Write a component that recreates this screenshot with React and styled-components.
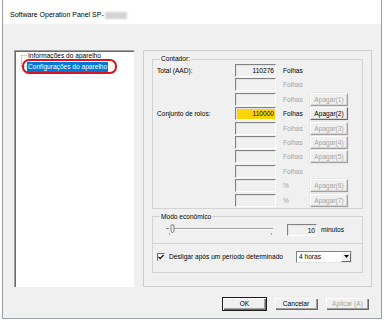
import React from "react";
import styled, { createGlobalStyle } from "styled-components";

const GlobalStyle = createGlobalStyle`
  html, body {
    margin: 0;
    padding: 0;
    background: #fff;
  }
  body {
    font-family: "Liberation Sans", Arial, sans-serif;
    font-size: 6.6px;
    color: #000;
  }
  * {
    box-sizing: border-box;
  }
`;

const Window = styled.div`
  width: 380px;
  height: 319px;
  margin-left: 2px;
  border: 1px solid #9a9ea6;
  border-top: none;
  display: flex;
  flex-direction: column;
`;

const TitleBar = styled.div`
  height: 24px;
  flex: none;
  background: #fff;
  padding: 6px 0 0 7px;
  display: flex;
  align-items: center;
  align-self: stretch;
  font-size: 7px;
  line-height: 10px;
`;

const Blurred = styled.span`
  display: inline-block;
  width: 22px;
  height: 7px;
  margin-left: 1px;
  background: #d4d4d4;
  filter: blur(1px);
`;

const Body = styled.div`
  flex: 1;
  background: #f0f0f0;
  padding: 26px 9px 0 11px;
  display: flex;
  flex-direction: column;
`;

const Main = styled.div`
  display: flex;
  gap: 9px;
  height: 237px;
`;

const Tree = styled.div`
  width: 120px;
  background: #fff;
  border-top: 1px solid #a0a0a0;
  border-left: 1px solid #a0a0a0;
  box-shadow: inset 1px 1px 0 #696969;
  overflow: hidden;
`;

const TreeItem = styled.div`
  height: 11px;
  display: flex;
  align-items: center;
  margin-top: ${(p) => (p.$first ? "-1px" : "0")};
`;

const TreeLabel = styled.span`
  position: relative;
  padding: 0 1px;
  line-height: 10px;
  background: ${(p) => (p.$selected ? "#0078d7" : "transparent")};
  color: ${(p) => (p.$selected ? "#fff" : "#000")};
`;

const Callout = styled.span`
  position: absolute;
  left: -5px;
  top: -3px;
  width: 95px;
  height: 15px;
  border: 2px solid #e3101c;
  border-radius: 7px;
`;

const TabPage = styled.div`
  flex: 1;
  border: 1px solid #cfcfcf;
  padding: 4px 8px;
  display: flex;
  flex-direction: column;
`;

const Group = styled.fieldset`
  margin: ${(p) => (p.$spaced ? "4px 0 0" : "0")};
  min-width: 0;
  border: 1px solid #d3d3d3;
  padding: ${(p) => p.$pad || "1px 4px 0 4px"};
`;

const Legend = styled.legend`
  margin-left: 3px;
  padding: 0 1px;
  font-size: 6.6px;
  line-height: 8px;
`;

const CounterRow = styled.div`
  display: grid;
  grid-template-columns: 78px 41px 34px 38px;
  height: 14.4px;
  align-items: start;
`;

const RowLabel = styled.span`
  line-height: 13px;
`;

const Field = styled.div`
  width: ${(p) => p.$w || "41px"};
  height: 13px;
  background: ${(p) => (p.$highlight ? "#ffd400" : "#f0f0f0")};
  border-top: 1px solid #828282;
  border-left: 1px solid #828282;
  border-right: 1px solid #fff;
  border-bottom: 1px solid #fff;
  box-shadow: inset 1px 1px 0 #e3e3e3;
  text-align: right;
  padding-right: 1px;
  line-height: 11px;
  overflow: hidden;
  white-space: nowrap;
`;

const Unit = styled.span`
  padding-left: 7px;
  line-height: 13px;
  color: ${(p) => (p.$disabled ? "#a5a5a5" : "#000")};
`;

const SmallButton = styled.div`
  width: 38px;
  height: 13px;
  background: #f0f0f0;
  border-top: 1px solid #fff;
  border-left: 1px solid #fff;
  border-right: 1px solid ${(p) => (p.$disabled ? "#a0a0a0" : "#696969")};
  border-bottom: 1px solid ${(p) => (p.$disabled ? "#a0a0a0" : "#696969")};
  box-shadow: inset -1px -1px 0 #d5d5d5, 0 0 0 0.5px #e0e0e0;
  color: ${(p) => (p.$disabled ? "#a5a5a5" : "#000")};
  text-align: center;
  line-height: 11px;
`;

const SliderRow = styled.div`
  height: 14px;
  display: flex;
  align-items: center;
`;

const Minutes = styled.span`
  margin-left: 4px;
`;

const PowerBox = styled.div`
  border: 1px solid #d3d3d3;
  border-top: none;
  padding: 7px 10px 9px 4px;
  display: flex;
  align-items: center;
`;

const CheckBox = styled.span`
  width: 8px;
  height: 8px;
  background: #fff;
  border-top: 1px solid #696969;
  border-left: 1px solid #696969;
  border-right: 1px solid #e3e3e3;
  border-bottom: 1px solid #e3e3e3;
  display: flex;
  align-items: center;
  justify-content: center;
`;

const CheckLabel = styled.span`
  flex: 1;
  margin-left: 4px;
  line-height: 10px;
`;

const Select = styled.div`
  width: 56px;
  height: 12px;
  background: #fff;
  border-top: 1px solid #828282;
  border-left: 1px solid #828282;
  border-right: 1px solid #e3e3e3;
  border-bottom: 1px solid #e3e3e3;
  display: flex;
  align-items: center;
  padding-left: 2px;
`;

const SelectText = styled.span`
  flex: 1;
  line-height: 10px;
`;

const SelectArrow = styled.span`
  width: 10px;
  height: 10px;
  background: #f0f0f0;
  border-right: 1px solid #696969;
  border-bottom: 1px solid #696969;
  border-top: 1px solid #fff;
  border-left: 1px solid #fff;
  display: flex;
  align-items: center;
  justify-content: center;
`;

const ButtonRow = styled.div`
  margin-top: 10px;
  padding-right: 2px;
  display: flex;
  justify-content: flex-end;
  gap: 6.5px;
`;

const DialogButton = styled.div`
  width: 45px;
  height: 14px;
  background: #f0f0f0;
  border: 1px solid ${(p) => (p.$default ? "#1a1a1a" : "#f0f0f0")};
  box-shadow: inset 1px 1px 0 #fff, inset -1px -1px 0 #696969,
    inset -2px -2px 0 #a0a0a0;
  color: ${(p) => (p.$disabled ? "#a5a5a5" : "#000")};
  text-align: center;
  line-height: 12px;
`;

const TreeLine = ({ up, down }) => (
  <svg width="12" height="11" viewBox="0 0 12 11" style={{ flex: "none" }}>
    <g stroke="#a0a0a0" strokeWidth="1" strokeDasharray="1 1" fill="none">
      <line x1="6.5" y1={up ? 0 : 5.5} x2="6.5" y2={down ? 11 : 5.5} />
      <line x1="6.5" y1="5.5" x2="12" y2="5.5" />
    </g>
  </svg>
);

const Slider = () => (
  <svg width="120" height="14" viewBox="0 0 120 14">
    <line x1="9" y1="5.5" x2="12" y2="5.5" stroke="#8a8a8a" />
    <line x1="15" y1="5.5" x2="116" y2="5.5" stroke="#a0a0a0" />
    <line x1="15" y1="6.5" x2="116" y2="6.5" stroke="#fff" />
    <polygon
      points="14,2 17,2 17,8 15.5,10 14,8"
      fill="#f0f0f0"
      stroke="#6a6a6a"
      strokeWidth="0.8"
    />
    <rect x="12" y="10.5" width="1" height="1" fill="#6a6a6a" />
    <rect x="114" y="10.5" width="1" height="1" fill="#6a6a6a" />
  </svg>
);

const counters = [
  { label: "Total (AAD):", value: "110276", unit: "Folhas" },
  { unit: "Folhas", off: true },
  { unit: "Folhas", off: true, button: "Apagar(1)" },
  { label: "Conjunto de rolos:", value: "110000", unit: "Folhas", highlight: true, button: "Apagar(2)", active: true },
  { unit: "Folhas", off: true, button: "Apagar(3)" },
  { unit: "Folhas", off: true, button: "Apagar(4)" },
  { unit: "Folhas", off: true, button: "Apagar(5)" },
  { unit: "Folhas", off: true },
  { unit: "%", off: true, button: "Apagar(6)" },
  { unit: "%", off: true, button: "Apagar(7)" },
];

export default function App() {
  return (
    <>
      <GlobalStyle />
      <Window>
        <TitleBar>
          Software Operation Panel SP-
          <Blurred />
        </TitleBar>
        <Body>
          <Main>
            <Tree>
              <TreeItem $first>
                <TreeLine down />
                <TreeLabel>Informações do aparelho</TreeLabel>
              </TreeItem>
              <TreeItem>
                <TreeLine up />
                <TreeLabel $selected>
                  Configurações do aparelho
                  <Callout />
                </TreeLabel>
              </TreeItem>
            </Tree>
            <TabPage>
              <Group>
                <Legend>Contador:</Legend>
                {counters.map((c, i) => (
                  <CounterRow key={i}>
                    <RowLabel>{c.label}</RowLabel>
                    <Field $highlight={c.highlight}>{c.value}</Field>
                    <Unit $disabled={c.off}>{c.unit}</Unit>
                    {c.button ? (
                      <SmallButton $disabled={!c.active}>{c.button}</SmallButton>
                    ) : (
                      <span />
                    )}
                  </CounterRow>
                ))}
              </Group>
              <Group $spaced $pad="2px 4px 6px 4px">
                <Legend>Modo econômico</Legend>
                <SliderRow>
                  <Slider />
                  <Field $w="30px" style={{ marginLeft: 10, height: 12 }}>
                    10
                  </Field>
                  <Minutes>minutos</Minutes>
                </SliderRow>
              </Group>
              <PowerBox>
                <CheckBox>
                  <svg width="6" height="6" viewBox="0 0 6 6">
                    <polyline
                      points="0.5,2.8 2.2,4.6 5.5,1"
                      fill="none"
                      stroke="#000"
                      strokeWidth="1.2"
                    />
                  </svg>
                </CheckBox>
                <CheckLabel>Desligar após um período determinado</CheckLabel>
                <Select>
                  <SelectText>4 horas</SelectText>
                  <SelectArrow>
                    <svg width="5" height="3" viewBox="0 0 5 3">
                      <polygon points="0,0 5,0 2.5,3" fill="#000" />
                    </svg>
                  </SelectArrow>
                </Select>
              </PowerBox>
            </TabPage>
          </Main>
          <ButtonRow>
            <DialogButton $default>OK</DialogButton>
            <DialogButton>Cancelar</DialogButton>
            <DialogButton $disabled>Aplicar (A)</DialogButton>
          </ButtonRow>
        </Body>
      </Window>
    </>
  );
}
